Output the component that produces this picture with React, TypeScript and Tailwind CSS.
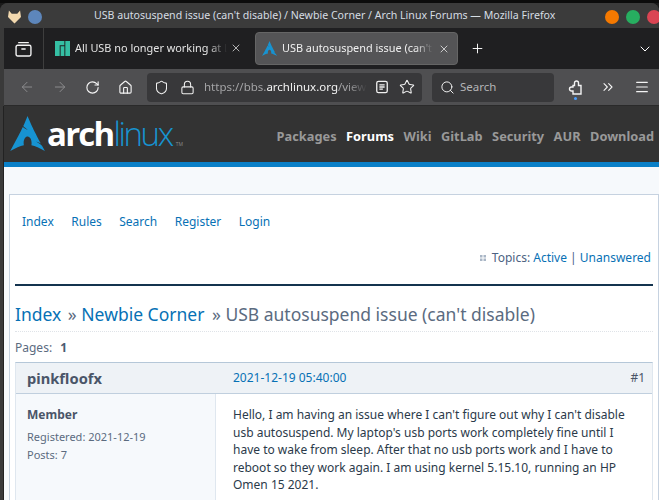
import { ArrowLeft, ArrowRight, RotateCw, Home, Shield, Lock, Star, Search, ChevronsRight, Menu, X, Plus, ChevronDown } from "lucide-react";

const font = { fontFamily: "'Noto Sans', sans-serif" };

const ArchLogo = ({ className }: { className: string }) => (
  <svg viewBox="0 0 100 100" className={className}>
    <path
      fill="#1793d1"
      d="M50 0C45.6 11 43 18 38 28.500C41 31.700 44.800 35.500 50.800 39.700C44.300 37 39.900 34.300 36.600 31.500C30.300 44.500 20.500 64 .7 100C16.300 91 28.400 85.500 39.700 83.400C39.200 81.300 38.900 79 38.900 76.600L39 76.100C39.200 66 44.500 58.300 50.800 58.800C57.100 59.300 62 67.900 61.700 78C61.700 79.900 61.500 81.700 61.100 83.400C72.300 85.600 84.300 91.200 99.700 100C96.700 94.500 94 89.500 91.400 84.700C87.400 81.500 83.100 77.400 74.400 72.900C80.400 74.500 84.700 76.300 88 78.300C62.300 30 60.200 23 50 0Z"
    />
  </svg>
);

const ManjaroLogo = () => (
  <svg viewBox="0 0 16 16" className="w-[15px] h-[15px] shrink-0">
    <path fill="#35bfa4" d="M0 0h10v4.500H5V16H0zM6 5.500h4V16H6zM11 0h5v16h-5z" />
  </svg>
);

export default function App() {
  const navLinks = ["Packages", "Forums", "Wiki", "GitLab", "Security", "AUR", "Download"];
  const subLinks = ["Index", "Rules", "Search", "Register", "Login"];

  return (
    <div className="w-[659px] h-[500px] overflow-hidden bg-[#1a1a1a]" style={font}>
      <div className="h-[3px] bg-[#0c0c0c]" />
      <div className="h-[497px] flex flex-col rounded-t-lg overflow-hidden bg-[#3a3a3a]">
        {/* Title bar */}
        <div className="h-[25px] shrink-0 bg-[#3b3b3b] flex items-center pl-2 relative">
          <svg viewBox="0 0 14 14" className="w-[13px] h-[14px] shrink-0 mt-[3px]">
            <path fill="#f2d8ae" d="M1 0l3 3.500h6L13 0l1 7-7 7-7-7z" />
          </svg>
          <div className="w-[14px] h-[14px] shrink-0 rounded-full bg-[#5d86bb] ml-[7px] mt-[3px]" />
          <span className="ml-[52px] text-[10.6px] text-[#d6dde3] whitespace-nowrap">
            USB autosuspend issue (can't disable) / Newbie Corner / Arch Linux Forums — Mozilla Firefox
          </span>
          <div className="absolute left-[605px] top-[7px] flex gap-[7px]">
            <div className="w-[14px] h-[14px] shrink-0 rounded-full bg-[#f57900]" />
            <div className="w-[14px] h-[14px] shrink-0 rounded-full bg-[#27ae60]" />
            <div className="w-[14px] h-[14px] shrink-0 rounded-full bg-[#da4453]" />
          </div>
        </div>

        {/* Tab bar */}
        <div className="h-[41px] shrink-0 ml-[4px] bg-[#1f1f21] flex items-center">
          <div className="w-[40px] h-full flex items-center justify-center border-r border-[#3e3e3e]">
            <svg viewBox="0 0 16 16" className="w-[17px] h-[17px]" fill="none" stroke="#f4f4f4" strokeWidth="1.3">
              <rect x="1" y="5" width="14" height="10" rx="1.5" />
              <path d="M3 2.500h10M6 8.500h4" />
            </svg>
          </div>
          <div className="flex items-center pl-[11px] gap-[5px]">
            <ManjaroLogo />
            <span className="text-[10.9px] text-[#e4e4e4] whitespace-nowrap overflow-hidden w-[152px] [mask-image:linear-gradient(to_right,black_88%,transparent)]">All USB no longer working at LT</span>
            <X className="w-[12px] h-[12px] text-[#e4e4e4] shrink-0 -ml-[2px]" strokeWidth={1.5} />
          </div>
          <div className="w-[203px] h-[33px] bg-[#545456] rounded-[4px] border border-[#656565] flex items-center pl-[6px] ml-[13px] gap-[5px]">
            <ArchLogo className="w-[15px] h-[15px] shrink-0" />
            <span className="text-[10.9px] text-[#f0f0f0] whitespace-nowrap overflow-hidden w-[151px] [mask-image:linear-gradient(to_right,black_88%,transparent)]">USB autosuspend issue (can't disable)</span>
            <X className="w-[12px] h-[12px] text-[#f0f0f0] shrink-0" strokeWidth={1.5} />
          </div>
          <Plus className="w-[15px] h-[15px] text-white ml-[12px]" strokeWidth={1.5} />
          <ChevronDown className="w-[16px] h-[16px] text-white ml-auto mr-[6px]" strokeWidth={1.5} />
        </div>

        {/* Toolbar */}
        <div className="h-[37px] shrink-0 ml-[4px] bg-[#4f4f51] flex items-center border-b border-[#2a2a2a]">
          <ArrowLeft className="w-[16px] h-[16px] text-[#8b8b8d] ml-[15px]" strokeWidth={1.5} />
          <ArrowRight className="w-[16px] h-[16px] text-[#8b8b8d] ml-[17px]" strokeWidth={1.5} />
          <RotateCw className="w-[15px] h-[15px] text-[#f4f4f4] ml-[17px]" strokeWidth={1.8} />
          <Home className="w-[15px] h-[15px] text-[#f4f4f4] ml-[18px]" strokeWidth={1.8} />
          <div className="w-[275px] h-[29px] ml-[14px] bg-[#38383a] rounded-[4px] flex items-center pl-[7px]">
            <Shield className="w-[15px] h-[15px] text-[#f0f0f0] shrink-0" strokeWidth={1.7} />
            <Lock className="w-[15px] h-[15px] text-[#f0f0f0] shrink-0 ml-[11px]" strokeWidth={1.7} />
            <span className="ml-[9px] w-[163px] shrink-0 overflow-hidden whitespace-nowrap text-[11.5px] text-[#a4a4a6] [mask-image:linear-gradient(to_right,black_88%,transparent)]">
              https://bbs.<span className="text-[#f2f2f2]">archlinux.org</span>/viewtopic.php
            </span>
            <svg viewBox="0 0 16 16" className="w-[14px] h-[14px] shrink-0 ml-[8px]" fill="none" stroke="#f0f0f0" strokeWidth="1.5">
              <rect x="2" y="1.500" width="12" height="13" rx="2" />
              <path d="M5 5.500h6M5 8h6M5 10.500h4" />
            </svg>
            <Star className="w-[16px] h-[16px] text-[#f0f0f0] shrink-0 ml-[10px]" strokeWidth={1.6} />
          </div>
          <div className="w-[122px] h-[29px] ml-[10px] bg-[#38383a] rounded-[4px] flex items-center pl-[8px]">
            <Search className="w-[15px] h-[15px] text-[#f0f0f0]" strokeWidth={1.6} />
            <span className="ml-[5px] text-[11.5px] text-[#b4b4b6]">Search</span>
          </div>
          <div className="relative ml-[14px]">
            <svg viewBox="0 0 16 16" className="w-[16px] h-[17px]" fill="none" stroke="#f4f4f4" strokeWidth="1.4">
              <path d="M5 6h1.500V3.500a2 2 0 0 1 4 0V6H13v8.500H5v-3H3.500a2 2 0 0 1 0-4H5z" />
            </svg>
            <div className="absolute left-[6px] top-[18px] w-[3px] h-[3px] rounded-full bg-[#4a9eff]" />
          </div>
          <ChevronsRight className="w-[16px] h-[16px] text-[#f4f4f4] ml-[16px]" strokeWidth={1.6} />
          <Menu className="w-[16px] h-[16px] text-[#f4f4f4] ml-[18px]" strokeWidth={1.8} />
        </div>

        {/* Page */}
        <div className="flex-1 ml-[3px] border-l border-[#222] bg-[#f6f9fc] min-h-0">
          <div className="h-[61px] bg-[#333] border-b-[5px] border-[#0a80c8] flex items-center pl-[6px]">
            <ArchLogo className="w-[35px] h-[35px] -mt-[2px]" />
            <div className="flex items-baseline ml-[2px] -mt-[2px] leading-none" style={{ fontFamily: "'Open Sans', sans-serif" }}>
              <span className="text-[33px] font-bold text-white tracking-[-1.8px]">arch</span>
              <span className="text-[33px] font-light text-[#1793d1] tracking-[-2.4px]">linux</span>
              <span className="text-[5px] text-[#8a8a8a] ml-[4px]">TM</span>
            </div>
            <nav className="ml-auto mr-[5px] mt-[6px] flex gap-[9.5px] text-[12.8px] font-bold text-[#999]">
              {navLinks.map((link) => (
                <span key={link} className={link === "Forums" ? "text-white" : ""}>{link}</span>
              ))}
            </nav>
          </div>

          <div className="pt-[27px] pl-[5px]">
            <div className="bg-white border border-[#c6d2e0] h-[400px] px-[5px]">
              <div className="flex gap-[17.5px] pl-[7px] pt-[18px] text-[12px] text-[#0771b5]">
                {subLinks.map((link) => (
                  <span key={link}>{link}</span>
                ))}
              </div>
              <div className="flex justify-end items-center pr-[2px] pt-[18px] text-[12px] text-[#4b6282]">
                <svg viewBox="0 0 6 6" className="w-[6px] h-[6px] mr-[6px]" fill="#a9b6c6">
                  <path d="M0 0h2.500v2.500H0zM3.500 0H6v2.500H3.500zM0 3.500h2.500V6H0zM3.500 3.500H6V6H3.500z" />
                </svg>
                Topics:&nbsp;<span className="text-[#0771b5]">Active</span>&nbsp;|&nbsp;<span className="text-[#0771b5]">Unanswered</span>
              </div>
              <div className="h-[2px] bg-[#14344f] mt-[17px]" />
              <div className="mt-[15px] text-[17.5px] leading-[26px] text-[#0771b5] whitespace-nowrap">
                Index <span className="text-[#5b6b7f] ml-[2px]">»</span> Newbie Corner <span className="text-[#5b6b7f] ml-[3px]">» USB autosuspend issue (can't disable)</span>
              </div>
              <div className="mt-[4px] border-t border-dotted border-[#dfe3e8]" />
              <div className="mt-[7px] text-[12px] leading-[17px] text-[#5b6b7f]">
                Pages: <span className="font-bold ml-[5px] text-[#4a5a70]">1</span>
              </div>
              <div className="mt-[6px] border-t border-[#b5c7d8] border-x border-x-[#dfe7ef]">
                <div className="h-[31px] bg-[#eef2f6] border-b border-[#c0cfde] flex items-center pl-[11px] pr-[7px]">
                  <span className="w-[206px] text-[14.7px] font-bold text-[#4a5568]">pinkfloofx</span>
                  <span className="text-[12px] text-[#0771b5]">2021-12-19 05:40:00</span>
                  <span className="ml-auto text-[12px] text-[#4a5568]">#1</span>
                </div>
                <div className="flex h-[120px]">
                  <div className="w-[200px] shrink-0 bg-[#f6f9fc] border-r border-[#dfe7ef] pl-[11px] pt-[12px]">
                    <div className="text-[12px] leading-[17px] font-bold text-[#4a5568]">Member</div>
                    <div className="mt-[5px] text-[11px] leading-[17.5px] text-[#5b6b7f]">
                      <div>Registered: 2021-12-19</div>
                      <div>Posts: 7</div>
                    </div>
                  </div>
                  <div className="flex-1 pl-[17px] pr-[24px] pt-[12px] text-[12px] leading-[17.5px] text-[#2b3a4a]">
                    Hello, I am having an issue where I can't figure out why I can't disable usb autosuspend. My laptop's usb ports work completely fine until I have to wake from sleep. After that no usb ports work and I have to reboot so they work again. I am using kernel 5.15.10, running an HP Omen 15 2021.
                  </div>
                </div>
              </div>
            </div>
          </div>
        </div>
      </div>
    </div>
  );
}
